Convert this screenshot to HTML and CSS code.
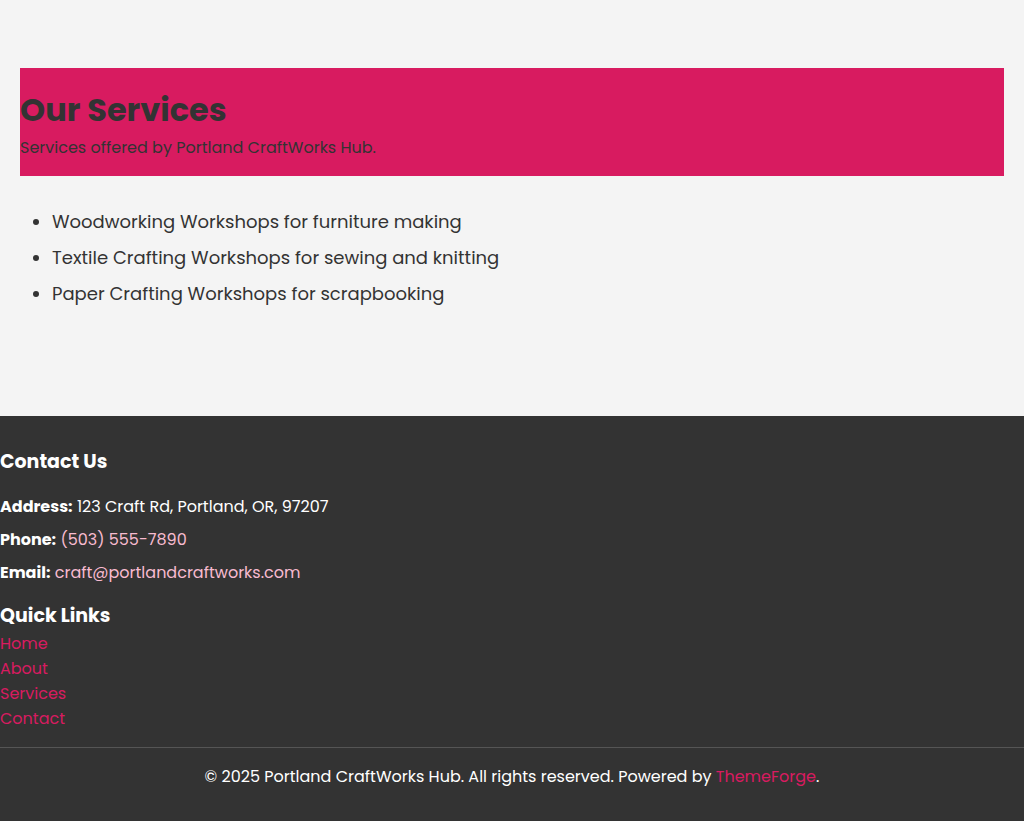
FILE: index.html
```html
<!DOCTYPE html>
<html>
<head>
    <meta charset="utf-8">
    <title>Our Services - Portland CraftWorks Hub</title>
    <link rel="stylesheet" href="styles.css">
</head>
<body>
    <main class="page">
        <section class="page-header">
            <h1>Our Services</h1>
            <p>Services offered by Portland CraftWorks Hub.</p>
        </section>
        <ul class="service-list">
            <li>Woodworking Workshops for furniture making</li>
            <li>Textile Crafting Workshops for sewing and knitting</li>
            <li>Paper Crafting Workshops for scrapbooking</li>
        </ul>
    </main>
    <footer class="site-footer">
        <div class="footer-block">
            <h3>Contact Us</h3>
            <p><strong>Address:</strong> 123 Craft Rd, Portland, OR, 97207</p>
            <p><strong>Phone:</strong> <a class="contact-link" href="#">(503) 555-7890</a></p>
            <p><strong>Email:</strong> <a class="contact-link" href="#">craft@portlandcraftworks.com</a></p>
        </div>
        <div class="footer-block">
            <h3 class="links-title">Quick Links</h3>
            <ul class="quick-links">
                <li><a href="#">Home</a></li>
                <li><a href="#">About</a></li>
                <li><a href="#">Services</a></li>
                <li><a href="#">Contact</a></li>
            </ul>
        </div>
        <div class="footer-bottom">
            <p>&copy; 2025 Portland CraftWorks Hub. All rights reserved. Powered by <a href="#">ThemeForge</a>.</p>
        </div>
    </footer>
</body>
</html>
```

FILE: styles.css
```css
body {
    margin: 0;
    background-color: #f4f4f4;
    color: #333;
    font-family: "Poppins", "Open Sans", sans-serif;
}

.page {
    padding: 68px 20px 0;
    height: 348px;
}

.page-header {
    background-color: #d81b60;
    padding: 22px 0 16px;
}

.page-header h1 {
    margin: 0 0 6px;
    font-size: 32px;
    line-height: 40px;
    font-weight: 700;
}

.page-header p {
    margin: 0;
    font-size: 16px;
    line-height: 24px;
}

.service-list {
    margin: 28px 0 0;
    padding-left: 32px;
    font-size: 18px;
    line-height: 36px;
}

.site-footer {
    background-color: #333;
    color: #fff;
    padding: 32px 0 48px;
}

.footer-block h3 {
    margin: 0 0 14px;
    font-size: 19px;
    line-height: 28px;
}

.footer-block p {
    margin: 0;
    font-size: 16px;
    line-height: 33px;
}

.contact-link {
    color: #f8bbd0;
    text-decoration: none;
}

.footer-block .links-title {
    margin: 13px 0 1px;
}

.quick-links {
    list-style: none;
    margin: 0;
    padding: 0;
    font-size: 16px;
    line-height: 25px;
}

.quick-links a {
    color: #d81b60;
    text-decoration: none;
}

.footer-bottom {
    margin-top: 16px;
    border-top: 1px solid #555;
    text-align: center;
    font-size: 16px;
    padding-top: 17px;
}

.footer-bottom p {
    margin: 0;
    line-height: 24px;
}

.footer-bottom a {
    color: #d81b60;
    text-decoration: none;
}
```
